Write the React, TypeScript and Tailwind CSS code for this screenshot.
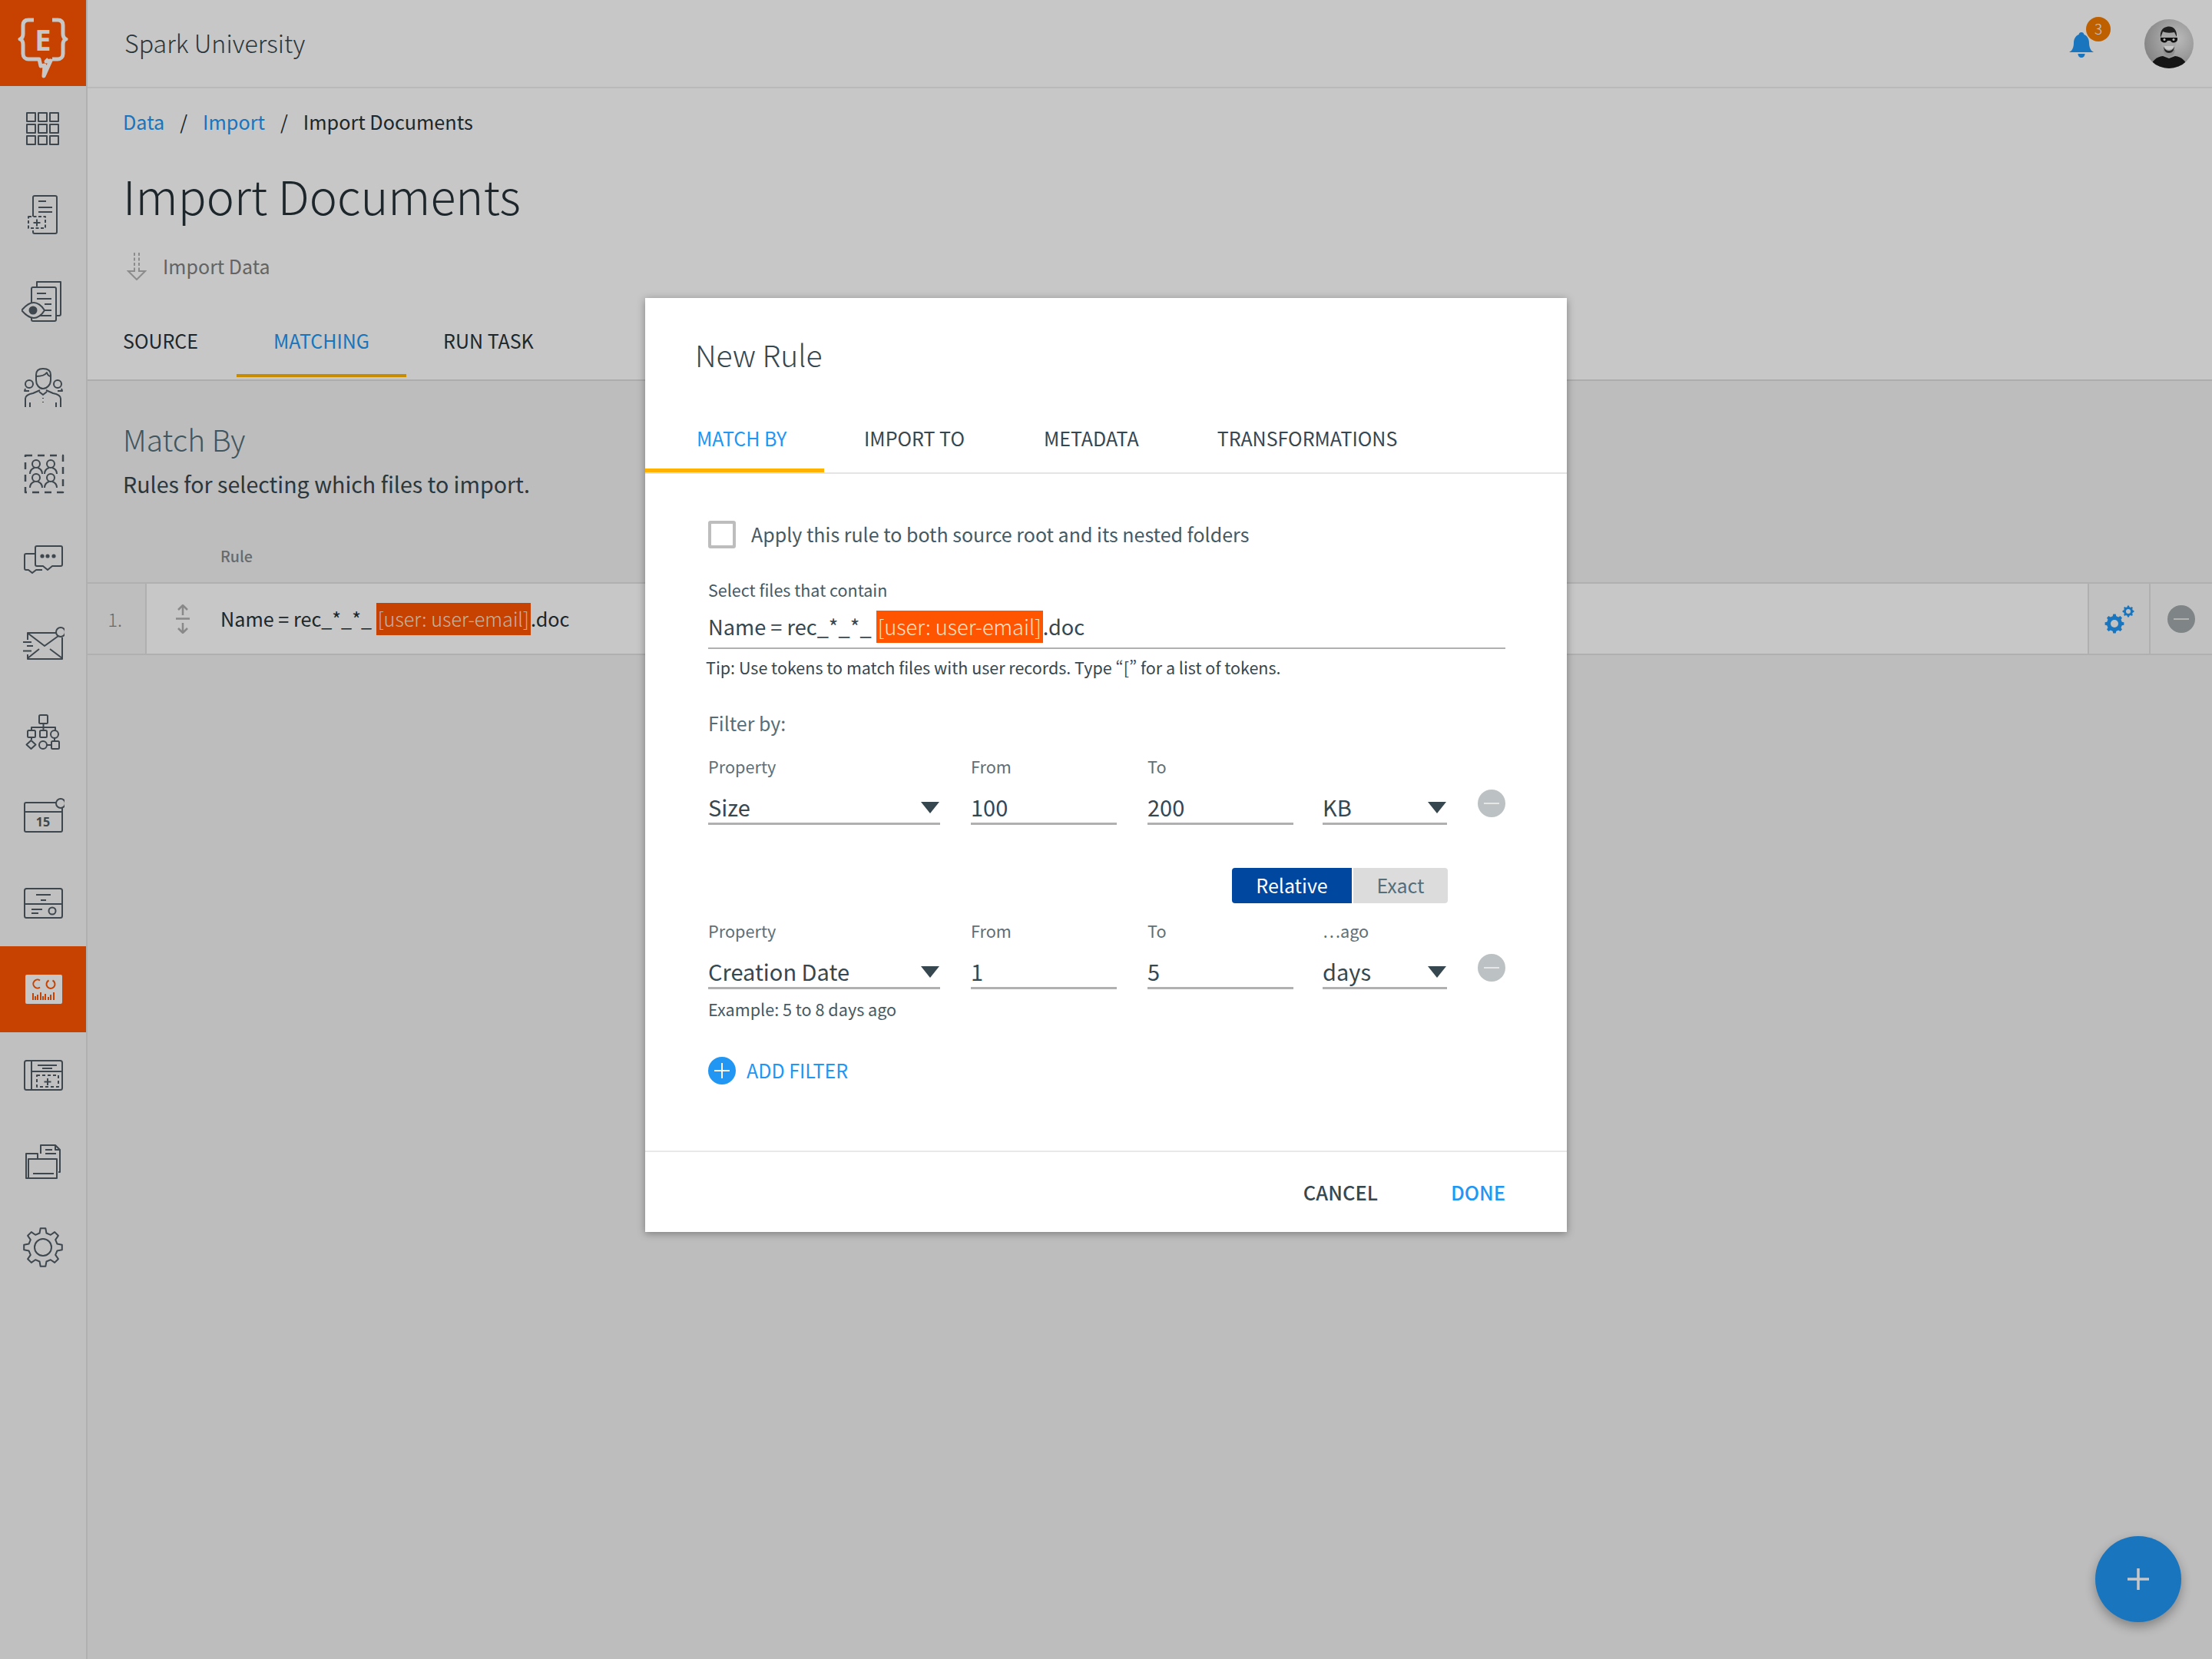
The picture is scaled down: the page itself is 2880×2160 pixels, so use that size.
import type { ReactNode } from "react";

const STROKE = "#505c64";

function gearPath(cx: number, cy: number, ro: number, ri: number, n: number) {
  const step = (Math.PI * 2) / n;
  const pt = (r: number, a: number) =>
    `${(cx + r * Math.cos(a)).toFixed(2)} ${(cy + r * Math.sin(a)).toFixed(2)}`;
  let d = "";
  for (let i = 0; i < n; i++) {
    const a = i * step - Math.PI / 2;
    d += `${i === 0 ? "M" : "L"}${pt(ri, a - step * 0.3)} L${pt(ro, a - step * 0.17)} L${pt(ro, a + step * 0.17)} L${pt(ri, a + step * 0.3)} `;
  }
  return d + "Z";
}

function Ico({ children }: { children: ReactNode }) {
  return (
    <svg width="56" height="56" viewBox="0 0 56 56" fill="none" stroke={STROKE} strokeWidth="2" strokeLinejoin="round">
      {children}
    </svg>
  );
}

const person = (x: number, y: number) => (
  <g key={`${x}-${y}`}>
    <circle cx={x} cy={y} r="5" />
    <path d={`M${x - 8} ${y + 13}c0-5 3-7 6-8M${x + 8} ${y + 13}c0-5-3-7-6-8`} />
  </g>
);

const navIcons: ReactNode[] = [
  <Ico>
    {[7, 22, 37].map((x) =>
      [7, 22, 37].map((y) => <rect key={`${x}${y}`} x={x} y={y} width="11" height="11" />),
    )}
  </Ico>,
  <Ico>
    <path d="M15 30V5a2 2 0 0 1 2-2h27a2 2 0 0 1 2 2v45a2 2 0 0 1-2 2H17a2 2 0 0 1-2-2v-2" />
    <path d="M22 10h10M22 18h18M22 24h18" />
    <rect x="9" y="30" width="22" height="15" strokeDasharray="4 2.5" />
    <path d="M20 33.500v9M15.500 38h9" />
  </Ico>,
  <Ico>
    <path d="M20 10V3h31v42a2 2 0 0 1-2 2h-4" />
    <path d="M13 34V12a2 2 0 0 1 2-2h28a2 2 0 0 1 2 2v40a2 2 0 0 1-2 2H15a2 2 0 0 1-2-2v-6" />
    <path d="M20 18h12M20 25h19M30 32h9M30 40h9M22 47h17" />
    <path d="M-1 40C5 33 11 30 15 30s10 3 14 10c-4 7-10 10-14 10S5 47-1 40Z" fill="#f6f6f6" transform="translate(1 0)" />
    <circle cx="15" cy="40" r="4.500" fill={STROKE} />
  </Ico>,
  <Ico>
    <path d="M19 12c0-6 4-8 9-8s10 2 10 8v7c0 6-5 11-10 11s-9-5-9-11Z" />
    <path d="M19 14c6 0 12-2 14-5 1 3 3 5 5 5" />
    <circle cx="10" cy="24" r="5" />
    <circle cx="47" cy="24" r="5" />
    <path d="M5 30l-1 3h6M52 30l1 3h-6" />
    <path d="M5 54V43c0-4 5-6 10-7l9-4M51 54V43c0-4-5-6-10-7l-9-4M23 34l5 4 5-4M28 42v1M28 47v1M11 48v6M45 48v6" />
  </Ico>,
  <Ico>
    <rect x="5" y="5" width="49" height="48" strokeDasharray="9 7" strokeWidth="2.500" />
    {person(19, 16)}
    {person(38, 16)}
    {person(19, 34)}
    {person(38, 34)}
  </Ico>,
  <Ico>
    <path d="M18 13a2 2 0 0 1 2-2h31a2 2 0 0 1 2 2v22a2 2 0 0 1-2 2H40l-6 5-6-5h-8a2 2 0 0 1-2-2Z" />
    <path d="M17 21H6a2 2 0 0 0-2 2v17a2 2 0 0 0 2 2h3l5 4 5-4h8" />
    <circle cx="27" cy="24" r="1.600" fill={STROKE} />
    <circle cx="34" cy="24" r="1.600" fill={STROKE} />
    <circle cx="42" cy="24" r="1.600" fill={STROKE} />
  </Ico>,
  <Ico>
    <path d="M8 21v-9h37M53 18v28H8v-6" />
    <path d="M9 13l21 16 18-13M8 45l15-12M53 45L37 33" />
    <path d="M2 24h11M7 29h8M2 35.500h11" />
    <circle cx="51" cy="11" r="6" />
  </Ico>,
  <Ico>
    <rect x="23" y="7" width="11" height="11" rx="1.500" />
    <path d="M28.500 18v9M13 27v-4h31v4" />
    <rect x="8" y="27" width="10" height="9" rx="1.500" />
    <rect x="24" y="27" width="9" height="9" rx="1.500" />
    <circle cx="43" cy="32" r="5" />
    <path d="M13 36v3M43 37v4M33 46h6" />
    <path d="M12.500 40l6 5.500-6 5.500-6-5.500Z" />
    <circle cx="28" cy="46" r="5" />
    <rect x="39" y="41" width="10" height="10" rx="1.500" />
  </Ico>,
  <Ico>
    <path d="M45 9H6a2 2 0 0 0-2 2v34a2 2 0 0 0 2 2h45a2 2 0 0 0 2-2V16" />
    <path d="M4 21h49" />
    <circle cx="51" cy="10" r="6" />
    <text x="28" y="40" textAnchor="middle" fontSize="16" fontWeight="700" fill={STROKE} stroke="none" fontFamily="'Noto Sans', sans-serif">15</text>
  </Ico>,
  <Ico>
    <rect x="4" y="9" width="49" height="38" rx="2.500" />
    <path d="M4 29h49M19 17h19M25 24h7M13 36h14M13 41h9" />
    <circle cx="40" cy="38" r="4.500" />
  </Ico>,
  <svg width="56" height="56" viewBox="0 0 56 56" fill="none">
    <rect x="5" y="9" width="48" height="38" rx="2" fill="#fff" />
    <g stroke="#ff5500" strokeWidth="2">
      <path d="M24 16.500a5.500 5.500 0 1 0 0 9" />
      <path d="M35.500 16.500a5.500 5.500 0 1 0 5 0" />
      <path d="M15 42v-9M18 42v-5M21 42v-7M25 42v-10M28 42v-5M31 42v-8M35 42v-4M38 42v-7M42 42v-10" />
    </g>
  </svg>,
  <Ico>
    <rect x="4" y="9" width="49" height="38" rx="2.500" />
    <path d="M13 9v38M13 23h40M21 15h25M27 19h13" />
    <rect x="20" y="28" width="28" height="15" strokeDasharray="4 3" />
    <path d="M34 32v9M29.500 36.500h9" />
  </Ico>,
  <Ico>
    <path d="M25 18V7h19l6 6v29h-2" />
    <path d="M44 7v6h6M31 13h9M31 18h14" />
    <path d="M21 24v-6H6v32h40V25H9v24" />
    <path d="M15 44h27" />
  </Ico>,
  <Ico>
    <path d={gearPath(28, 28, 25, 19, 8)} />
    <circle cx="28" cy="28" r="11" />
  </Ico>,
];

function Logo() {
  return (
    <svg width="112" height="112" viewBox="0 0 112 112" fill="none" stroke="#fff" strokeWidth="5">
      <path d="M44 26H37c-5 0-7 3-7 7v11c0 4-1 6-4 7 3 1 4 4 4 7v12c0 4 3 7 7 7h14l2 9 5-1-1 14 9-20-6 1 3-3" strokeLinejoin="round" />
      <path d="M68 26h7c5 0 7 3 7 7v11c0 4 1 6 4 7-3 1-4 4-4 7v12c0 4-3 7-7 7h-7" strokeLinejoin="round" />
      <text x="56" y="66" textAnchor="middle" fontSize="38" fontWeight="700" fill="#fff" stroke="none" fontFamily="'Noto Sans', sans-serif">E</text>
    </svg>
  );
}

function Avatar() {
  return (
    <svg width="64" height="64" viewBox="0 0 64 64">
      <defs>
        <clipPath id="av"><circle cx="32" cy="32" r="32" /></clipPath>
        <radialGradient id="avbg" cx="0.65" cy="0.4" r="0.7">
          <stop offset="0" stopColor="#f0f0f0" />
          <stop offset="1" stopColor="#a8a8a8" />
        </radialGradient>
      </defs>
      <g clipPath="url(#av)">
        <rect width="64" height="64" fill="url(#avbg)" />
        <path d="M8 64c1-10 8-15 16-16l8 3 8-3c8 1 15 6 16 16Z" fill="#1c1c1c" />
        <path d="M24 40c2 7 5 9 8 9s7-2 8-9Z" fill="#b8b8b8" />
        <ellipse cx="32" cy="27" rx="10" ry="14" fill="#d8d8d8" />
        <path d="M21 24c-1-9 3-13 8-14 6-2 14 2 13 13l-3-6c-6 1-11 1-15-1Z" fill="#2a2a2a" />
        <path d="M21 24h22v3c-1 4-7 5-9 1h-4c-2 4-8 3-9-1Z" fill="#141414" />
        <circle cx="26" cy="26.500" r="1.500" fill="#eee" />
        <circle cx="38" cy="26.500" r="1.500" fill="#eee" />
        <path d="M25 35c3 6 11 6 14 0Z" fill="#fff" />
        <path d="M25 35c0 6 3 9 7 9s7-3 7-9c-2 8-12 8-14 0Z" fill="#333" />
      </g>
    </svg>
  );
}

function Minus({ dark }: { dark?: boolean }) {
  return (
    <div className={`flex h-[36px] w-[36px] shrink-0 items-center justify-center rounded-full ${dark ? "bg-[#a3a9ac]" : "bg-[#bcc1c4]"}`}>
      <div className="h-[2px] w-[20px] bg-[#e6e6e6]" />
    </div>
  );
}

function Caret() {
  return (
    <svg width="24" height="15" viewBox="0 0 24 15" className="mb-[12px] shrink-0">
      <path d="M0 0h24L12 15Z" fill="#37474f" />
    </svg>
  );
}

function Field({ w, value, caret }: { w: number; value: string; caret?: boolean }) {
  return (
    <div
      className="flex h-[48px] items-end justify-between border-b-[3px] border-[#b0b0b0] pr-[1px] text-[29px] leading-[42px] text-[#37474f]"
      style={{ width: w }}
    >
      <span>{value}</span>
      {caret ? <Caret /> : null}
    </div>
  );
}

function FilterRow({ labels, values, className }: { labels: string[]; values: string[]; className?: string }) {
  const widths = [302, 190, 190, 162];
  return (
    <div className={className}>
      <div className="flex h-[30px] text-[21.700px] leading-[28px] text-[#5f6f77]">
        <span className="w-[342px]">{labels[0]}</span>
        <span className="w-[230px]">{labels[1]}</span>
        <span className="w-[228px]">{labels[2]}</span>
        <span>{labels[3]}</span>
      </div>
      <div className="mt-[12px] flex items-start">
        <Field w={widths[0]} value={values[0]} caret />
        <div className="ml-[40px]"><Field w={widths[1]} value={values[1]} /></div>
        <div className="ml-[40px]"><Field w={widths[2]} value={values[2]} /></div>
        <div className="ml-[38px]"><Field w={widths[3]} value={values[3]} caret /></div>
        <div className="ml-[40px] mt-[2px]"><Minus /></div>
      </div>
    </div>
  );
}

function RuleModal() {
  return (
    <div className="absolute left-[840px] top-[388px] flex h-[1216px] w-[1200px] flex-col bg-white shadow-[0_2px_10px_rgba(0,0,0,0.35)]">
      <div className="ml-[65px] mt-[43px] h-[60px] text-[39px] font-light leading-[60px] text-[#37474f]">New Rule</div>
      <div className="mt-[36px] flex h-[90px] border-b-2 border-[#e4e4e4] text-[25px] leading-[86px] text-[#37474f]">
        <div className="w-[233px] border-b-[5px] border-[#ffb300] pl-[67px] text-[#2196f3]">MATCH BY</div>
        <div className="ml-[52px]">IMPORT TO</div>
        <div className="ml-[103px]">METADATA</div>
        <div className="ml-[102px]">TRANSFORMATIONS</div>
      </div>
      <div className="flex-1 pl-[82px] pr-[80px]">
        <div className="mt-[59px] flex h-[40px] items-center gap-[20px]">
          <div className="h-[36px] w-[36px] rounded-[3px] border-4 border-[#bdbdbd]" />
          <span className="text-[25px] text-[#455a64]">Apply this rule to both source root and its nested folders</span>
        </div>
        <div className="mt-[36px] h-[32px] text-[21.500px] leading-[32px] text-[#455a64]">Select files that contain</div>
        <div className="mt-[11px] flex h-[50px] border-b-2 border-[#b0b0b0] text-[27.200px] leading-[40px] text-[#37474f]">
          <span className="whitespace-pre">Name = rec_*_*_ </span>
          <span className="h-[42px] bg-[#ff5500] px-[2px] font-light text-[#ffe0c8]">[user: user-email]</span>
          <span>.doc</span>
        </div>
        <div className="-ml-[3px] mt-[8px] h-[32px] text-[21.500px] leading-[32px] text-[#37474f]">
          Tip: Use tokens to match files with user records. Type <span className="[font-feature-settings:'pwid']">“[”</span> for a list of tokens.
        </div>
        <div className="mt-[38px] h-[36px] text-[25px] leading-[36px] text-[#546e7a]">Filter by:</div>
        <FilterRow
          className="mt-[25px]"
          labels={["Property", "From", "To", ""]}
          values={["Size", "100", "200", "KB"]}
        />
        <div className="ml-[682px] mt-[56px] flex h-[46px] w-[281px] text-[25px] leading-[44px]">
          <div className="w-[156px] rounded-l-[4px] bg-[#0047a0] text-center text-white">Relative</div>
          <div className="ml-[2px] flex-1 rounded-r-[4px] bg-[#dcdcdc] text-center text-[#546e7a]">Exact</div>
        </div>
        <FilterRow
          className="mt-[22px]"
          labels={["Property", "From", "To", "…ago"]}
          values={["Creation Date", "1", "5", "days"]}
        />
        <div className="mt-[11px] h-[30px] text-[21.600px] leading-[30px] text-[#455a64]">Example: 5 to 8 days ago</div>
        <div className="mt-[47px] flex h-[36px] items-center gap-[14px] text-[25px] text-[#2196f3]">
          <div className="flex h-[36px] w-[36px] items-center justify-center rounded-full bg-[#2196f3]">
            <svg width="20" height="20" viewBox="0 0 20 20" stroke="#fff" strokeWidth="2">
              <path d="M10 0v20M0 10h20" />
            </svg>
          </div>
          <span>ADD FILTER</span>
        </div>
      </div>
      <div className="flex h-[106px] items-center justify-end gap-[95px] border-t-2 border-[#e8e8e8] pr-[80px] text-[25.500px] font-medium">
        <span className="text-[#37474f]">CANCEL</span>
        <span className="text-[#2196f3]">DONE</span>
      </div>
    </div>
  );
}

export default function App() {
  return (
    <div className="relative flex h-[2160px] w-[2880px] overflow-hidden bg-[#f2f2f2] [font-family:'Noto_Sans_CJK_SC','Noto_Sans',sans-serif]">
      {/* sidebar */}
      <aside className="flex w-[114px] shrink-0 flex-col border-r-2 border-[#e2e2e2] bg-[#f6f6f6]">
        <div className="h-[112px] w-[112px] bg-[#ff5500]"><Logo /></div>
        {navIcons.map((icon, i) => (
          <div key={i} className={`flex h-[112px] w-[112px] items-center justify-center ${i === 10 ? "bg-[#ff5500]" : ""}`}>
            {icon}
          </div>
        ))}
      </aside>

      <main className="flex min-w-0 flex-1 flex-col">
        <header className="flex h-[115px] shrink-0 items-center justify-between border-b-2 border-[#eeeeee] bg-white pl-[48px] pr-[24px]">
          <span className="-mt-[3px] text-[32.200px] font-light text-[#37474f]">Spark University</span>
          <div className="flex items-center gap-[66px]">
            <div className="relative h-[36px] w-[32px]">
              <svg width="32" height="34" viewBox="0 0 32 34" className="mt-[3px]">
                <path d="M16 0c2 0 3 1 3.500 3C24 5 26 9 26 14c0 4 1 7 3 10l3 2H0l3-2c2-3 3-6 3-10 0-5 2-9 6.500-11C13 1 14 0 16 0Z" fill="#2196f3" />
                <path d="M11.500 28h9c0 3-2 5-4.500 5s-4.500-2-4.500-5Z" fill="#2196f3" />
              </svg>
              <span className="absolute -top-[17px] left-[22px] flex h-[32px] w-[32px] items-center justify-center rounded-full bg-[#f57c00] text-[19px] font-light text-white">3</span>
            </div>
            <Avatar />
          </div>
        </header>

        <section className="h-[381px] shrink-0 border-b-2 border-[#dddddd] bg-white">
          <nav className="ml-[46px] mt-[26px] flex h-[36px] items-center text-[25.200px] text-[#263238]">
            <span className="text-[#2196f3]">Data</span>
            <span className="mx-[20px]">/</span>
            <span className="text-[#2196f3]">Import</span>
            <span className="mx-[20px]">/</span>
            <span>Import Documents</span>
          </nav>
          <h1 className="ml-[46px] mt-[37px] h-[80px] text-[61px] font-light leading-[80px] text-[#263238]">Import Documents</h1>
          <div className="ml-[51px] mt-[35px] flex h-[36px] items-center gap-[21px] text-[25px] text-[#808080]">
            <svg width="26" height="36" viewBox="0 0 26 36" fill="none" stroke="#b4b4b4" strokeWidth="2">
              <path d="M10 0v22M16 0v22" strokeDasharray="4 2.500" />
              <path d="M10 20v4H2l11 11 11-11h-8v-4" />
            </svg>
            <span>Import Data</span>
          </div>
          <div className="mt-[34px] flex h-[92px] text-[25px] leading-[88px] text-[#263238]">
            <div className="pl-[46px] pr-[50px]">SOURCE</div>
            <div className="border-b-[4px] border-[#ffb300] px-[48px] text-[#2196f3]">MATCHING</div>
            <div className="px-[48px]">RUN TASK</div>
          </div>
        </section>

        <section className="flex-1">
          <h2 className="ml-[46px] mt-[45px] h-[60px] text-[39px] font-light leading-[60px] text-[#546e7a]">Match By</h2>
          <p className="ml-[46px] mt-[7px] h-[44px] text-[28.600px] leading-[44px] text-[#37474f]">Rules for selecting which files to import.</p>
          <div className="ml-[173px] mt-[57px] h-[30px] text-[19.600px] font-medium leading-[30px] text-[#808a8f]">Rule</div>
          <div className="mt-[19px] flex h-[95px] border-y-2 border-[#e2e2e2] bg-white">
            <div className="flex w-[77px] items-center justify-end border-r-2 border-[#e2e2e2] bg-[#f4f4f4] pr-[30px] text-[24px] font-light text-[#808a8f]">1.</div>
            <div className="flex w-[96px] shrink-0 items-center pl-[38px]">
              <svg width="18" height="38" viewBox="0 0 18 38" fill="none" stroke="#b0b0b0" strokeWidth="2.500">
                <path d="M9 1v13M3 7l6-6 6 6M0 18.500h18M9 24v13M3 31l6 6 6-6" />
              </svg>
            </div>
            <div className="flex flex-1 items-center whitespace-pre text-[25.200px] text-[#263238]">
              <span>Name = rec_*_*_ </span>
              <span className="flex h-[42px] items-center bg-[#ff5500] px-[2px] font-light text-[#ffe0c8]">[user: user-email]</span>
              <span>.doc</span>
            </div>
            <div className="flex w-[80px] items-center justify-center border-l-2 border-[#e2e2e2] bg-[#f8f8f8]">
              <svg width="40" height="40" viewBox="0 0 40 40">
                <path d={gearPath(14, 26, 12.500, 10, 8)} fill="#2196f3" />
                <circle cx="14" cy="26" r="5" fill="#f8f8f8" />
                <path d={gearPath(32, 10, 7.500, 6, 8)} fill="#2196f3" />
                <circle cx="32" cy="10" r="3" fill="#f8f8f8" />
              </svg>
            </div>
            <div className="flex w-[82px] items-center justify-center border-l-2 border-[#e2e2e2] bg-[#f8f8f8]">
              <Minus dark />
            </div>
          </div>
        </section>
      </main>

      <div className="absolute right-[40px] top-[2000px] flex h-[112px] w-[112px] items-center justify-center rounded-full bg-[#2196f3] shadow-[0_6px_14px_rgba(0,0,0,0.3)]">
        <svg width="28" height="28" viewBox="0 0 28 28" stroke="#fff" strokeWidth="3.500">
          <path d="M14 0v28M0 14h28" />
        </svg>
      </div>

      <div className="absolute inset-0 bg-black/[0.22]" />
      <RuleModal />
    </div>
  );
}
